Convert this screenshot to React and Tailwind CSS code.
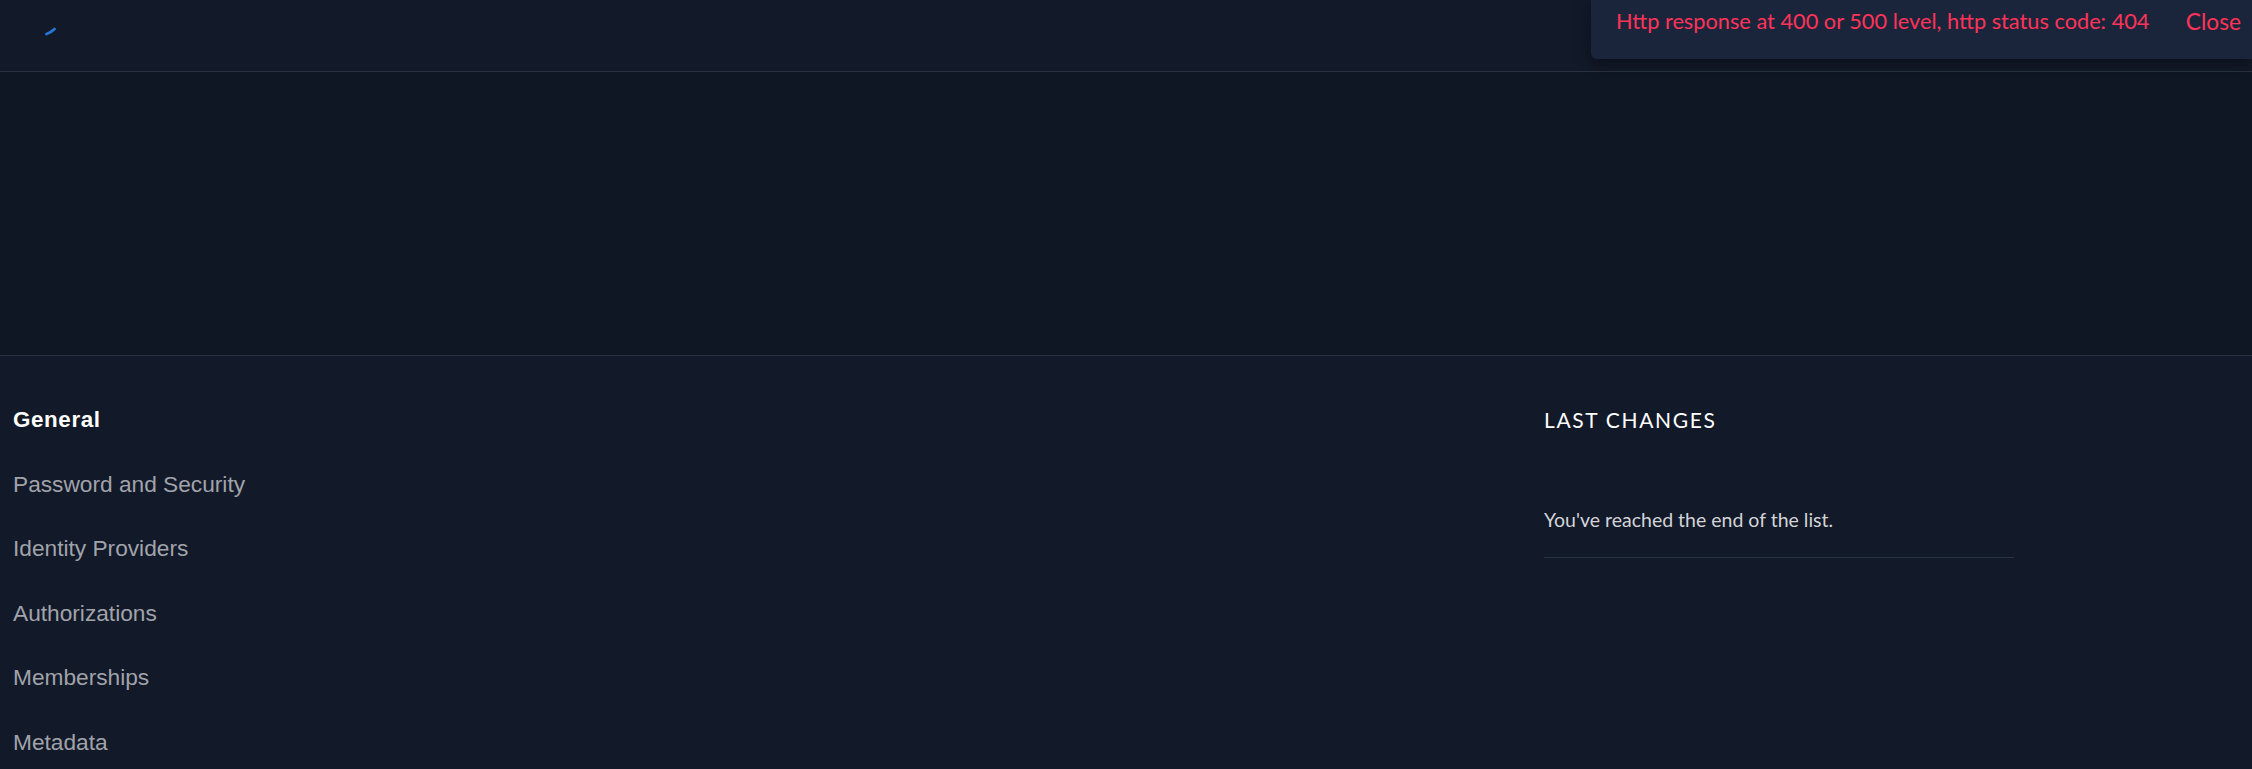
import React from "react";

const navItems = ["Password and Security", "Identity Providers", "Authorizations", "Memberships", "Metadata"];

function App() {
  return (
    <div className="relative h-[769px] overflow-hidden bg-[#121928] font-['Liberation_Sans',sans-serif]">
      <header className="flex h-[72px] items-start border-b border-[#2a3140] pl-[45px] pt-[27px]">
        <svg width="12" height="9" viewBox="0 0 12 9" fill="none">
          <path d="M1.5 7 C4 6.2 6.5 5 9.5 2" stroke="#2477d4" strokeWidth="2.8" strokeLinecap="round" />
        </svg>
      </header>

      <div className="h-[284px] border-b border-[#2a3140] bg-[#0f1624]" />

      <main className="flex">
        <nav className="w-[1544px] shrink-0 pl-[13px] pt-[51px]">
          <div className="text-[22.4px] font-bold leading-[25px] tracking-[0.6px] text-white">General</div>
          <ul className="mt-[39.5px] flex flex-col gap-[39.5px]">
            {navItems.map((item) => (
              <li key={item} className="text-[22.7px] leading-[25px] text-[#a1a3ab]">
                {item}
              </li>
            ))}
          </ul>
        </nav>
        <section className="w-[470px] pt-[52px] font-['Lato',sans-serif]">
          <h2 className="text-[21px] leading-[24px] tracking-[1.65px] text-white">LAST CHANGES</h2>
          <p className="mt-[76px] text-[19.5px] leading-[24px] text-[#d3d4d8]">You've reached the end of the list.</p>
          <div className="mt-[25px] h-px bg-[#253342]" />
        </section>
      </main>

      <div className="absolute right-0 top-0 flex h-[59px] w-[661px] items-start justify-between rounded-bl-[6px] bg-[#1a253c] pl-[25px] pr-[11px] pt-[8px] font-['Lato',sans-serif] text-[21.75px] leading-[27px] text-[#ff3358] shadow-[0_4px_16px_rgba(0,0,0,0.4)]">
        <span>Http response at 400 or 500 level, http status code: 404</span>
        <button className="text-[22.7px]">Close</button>
      </div>
    </div>
  );
}

export default App;
